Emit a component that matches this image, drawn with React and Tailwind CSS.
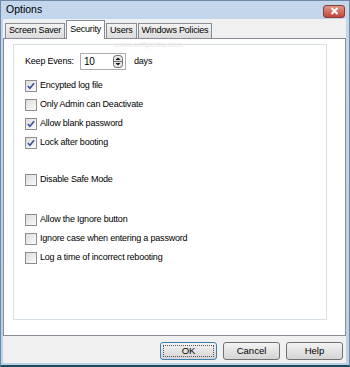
import React from 'react';

const font = { fontFamily: '"Liberation Sans", Arial, sans-serif' };

const Check = ({ checked, label }) => (
  <div className="flex items-center h-[19px]">
    <span className="w-[12px] h-[12px] border border-[#8f8f8f] bg-gradient-to-br from-[#dcdcdc] to-[#fbfbfb] flex items-center justify-center">
      {checked && (
        <svg width="8" height="8" viewBox="0 0 9 9">
          <path d="M1 4.5 L3.3 7 L8 1.5" fill="none" stroke="#3b4f9c" strokeWidth="1.8" />
        </svg>
      )}
    </span>
    <span className="ml-[3px] text-[9px] tracking-[-0.2px] text-black">{label}</span>
  </div>
);

const Tab = ({ label, active }) =>
  active ? (
    <div className="h-[19px] px-[3px] bg-white border border-b-0 border-[#898c95] -mb-px relative z-10 flex items-start pt-[2px] text-[9px] tracking-[-0.2px]">
      {label}
    </div>
  ) : (
    <div className="h-[15px] mt-[3px] px-[3px] bg-gradient-to-b from-[#f2f2f2] to-[#dcdcdc] border border-b-0 border-[#898c95] flex items-center text-[9px] tracking-[-0.2px]">
      {label}
    </div>
  );

const Button = ({ label, primary }) => (
  <button
    className={`w-[57px] h-[18px] rounded-[3px] border text-[9.5px] bg-gradient-to-b from-[#f3f3f3] to-[#d4d4d4] flex items-center justify-center ${
      primary ? 'border-[#3c7fb1]' : 'border-[#707070]'
    }`}
  >
    <span className={primary ? 'w-[51px] h-[12px] leading-[10px] border border-dotted border-[#555]' : ''}>{label}</span>
  </button>
);

export default function App() {
  return (
    <div
      className="w-[350px] h-[367px] bg-gradient-to-b from-[#c3d6ec] to-[#bcd0e8] border border-[#6f88a6] border-b-[2px] border-b-[#1d4d5c] flex flex-col overflow-hidden"
      style={font}
    >
      {/* Title bar */}
      <div className="h-[18px] flex items-center justify-between pl-[5px] pr-[4px]">
        <span className="text-[10.5px] text-black">Options</span>
        <div className="w-[22px] h-[13px] mt-[2px] rounded-[3px] border border-[#8a3b33] bg-gradient-to-b from-[#e0958a] to-[#c0463a] flex items-center justify-center">
          <svg width="9" height="8" viewBox="0 0 9 8">
            <path d="M1.5 1 L7.5 7 M7.5 1 L1.5 7" stroke="white" strokeWidth="2" />
          </svg>
        </div>
      </div>

      {/* Client area */}
      <div className="flex-1 ml-[2px] mr-[3px] mb-[2px] bg-[#f0f0f0] flex flex-col">
        <div className="flex items-end pl-[2px] pt-[1px] gap-px">
          <Tab label="Screen Saver" />
          <Tab label="Security" active />
          <Tab label="Users" />
          <Tab label="Windows Policies" />
        </div>

        <div className="h-[298px] bg-white border border-[#898c95] pl-[9px] pr-[18px] pt-[5px] flex flex-col">
          <div className="relative h-[276px] border border-[#d5dfe5] pl-[11px] pt-[8px]">
            <span className="absolute left-[100px] -top-[6px] text-[8px] text-[#e6e6e6]">www.softpedia.com</span>

            <div className="flex items-center h-[17px] text-[9px] tracking-[-0.2px] whitespace-nowrap">
              <span className="w-[55px]">Keep Evens:</span>
              <div className="w-[46px] h-[17px] border border-[#abadb3] flex items-center justify-between pl-[3px] pr-[2px] text-[10px]">
                <span>10</span>
                <svg width="10" height="13" viewBox="0 0 10 13">
                  <rect x="0.5" y="0.5" width="9" height="12" rx="3" fill="#e8e8e8" stroke="#6d6d6d" />
                  <line x1="1" y1="6.5" x2="9" y2="6.5" stroke="#6d6d6d" />
                  <path d="M2.5 5 L5 2.5 L7.5 5 Z" fill="#111" />
                  <path d="M2.5 8 L5 10.5 L7.5 8 Z" fill="#111" />
                </svg>
              </div>
              <span className="ml-[8px]">days</span>
            </div>

            <div className="mt-[6px] flex flex-col">
              <Check checked label="Encypted log file" />
              <Check label="Only Admin can Deactivate" />
              <Check checked label="Allow blank password" />
              <Check checked label="Lock after booting" />
              <div className="h-[18px]" />
              <Check label="Disable Safe Mode" />
              <div className="h-[21px]" />
              <Check label="Allow the Ignore button" />
              <Check label="Ignore case when entering a password" />
              <Check label="Log a time of incorrect rebooting" />
            </div>
          </div>
        </div>

        <div className="flex justify-end gap-[6px] pr-[3px] pt-[6px]">
          <Button label="OK" primary />
          <Button label="Cancel" />
          <Button label="Help" />
        </div>
      </div>
    </div>
  );
}
